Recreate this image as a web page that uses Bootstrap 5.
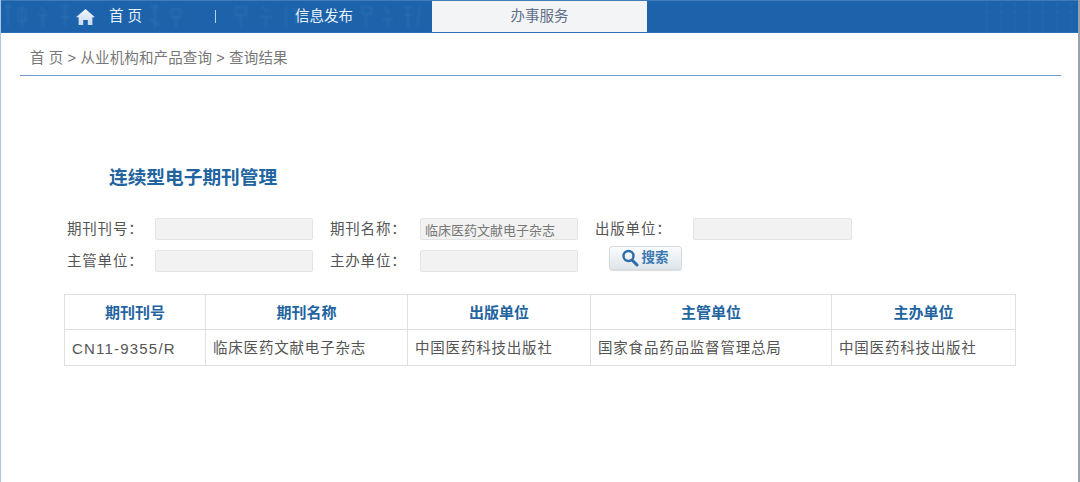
<!DOCTYPE html>
<html lang="zh">
<head>
<meta charset="utf-8">
<title>连续型电子期刊管理</title>
<link href="https://cdn.jsdelivr.net/npm/bootstrap@5.3.0/dist/css/bootstrap.min.css" rel="stylesheet">
<style>
html,body{height:482px;overflow:hidden;background:#fff}
body{font-family:"Liberation Sans","Noto Sans CJK SC",sans-serif;color:#555;font-size:14px;border-right:2px solid #9aa3ad;border-left:1px solid #a9c6e4}
.topbar{height:33px;background:#1d63ab;border-top:1px solid #3f7cbc;border-bottom:1px solid #2d6fb2;margin-left:-1px;margin-right:-2px;position:relative;overflow:hidden}
.topbar-pat{position:absolute;inset:0;pointer-events:none}
.home-link{width:215px;padding-left:76px;color:#eaf2fa;font-size:14.5px;gap:14px}
.home-link span,.info-link,.active-tab span{padding-top:1px}
.sep{width:1px;height:13px;background:#b9d0e8;align-self:center}
.info-link{width:216px;padding-left:79px;color:#eaf2fa;font-size:14.5px}
.active-tab{width:215px;height:31px;background:#f3f4f6;color:#5f7088;font-size:14.5px}
.crumb{margin:0 17px 0 19px;height:43px;padding:16px 0 0 10px;border-bottom:1px solid #6f9bd0;color:#777;font-size:14.5px;line-height:18px;letter-spacing:.14px}
.pg-title{margin:90px 0 0 108px;font-size:18.700px;line-height:24px;font-weight:700;color:#22649f}
.qform{margin:28px 0 0 66px;row-gap:10px;width:800px}
.qrow{height:22px}
.qlabel{width:88px;font-size:14.5px;letter-spacing:.8px;color:#555;line-height:22px}
.qlabel.w2{width:90px;margin-left:17px}
.qlabel.w3{width:98px;margin-left:17px}
.qinput{width:158px;height:22px;background:#f2f2f2;border:1px solid #e4e4e4;border-radius:2px;font-size:13px;color:#777;padding:0 4px;font-family:inherit}
.qinput.wide{width:159px}
.sbtn{width:73px;height:24px;margin:-4px 0 0 31px;background:linear-gradient(#fbfcfd,#dfe5ea);border:1px solid #d5dade;border-radius:3px;color:#3a78b2;font-size:13.5px;font-weight:700;gap:3px;padding:0 2px 0 0;box-shadow:0 1px 1px #ddd}
.rtable{margin:22px 0 0 63px;width:951px;table-layout:fixed;border-color:#dcdfe3;color:#555}
.rtable>:not(caption)>*>*{border:1px solid #dcdfe3;padding:0 7px;vertical-align:middle;color:#555;font-size:14.5px;background:transparent;box-shadow:none}
.rtable thead th{height:35px;text-align:center;color:#22649f;font-weight:700;font-size:15px;padding-top:2px}
.rtable tbody td{height:36px;letter-spacing:.8px;padding-top:3px}
.rtable tbody td.code-cell{letter-spacing:1.2px;font-size:15px}
</style>
</head>
<body>
<div class="topbar d-flex align-items-center">
  <svg class="topbar-pat" width="1080" height="33" aria-hidden="true">
    <defs><filter id="soft"><feGaussianBlur stdDeviation="1.1"/></filter></defs>
    <g fill="none" stroke="#4a86c4" stroke-width="1.600" opacity=".3" filter="url(#soft)">
      <path d="M4 6h9M8 3v22M18 8h8v12h-8zM22 4v22M40 6l5 5M38 14h10M43 14v12M60 5h10M65 5v20M60 16h10M112 5v8M120 4l-4 10M150 6h9M155 3v24M150 18l10 6M172 8h8v8h-8zM176 16v10M236 6h10v8h-10zM241 14v12M262 5l6 6M260 16h12M266 16v10M286 5v22M292 8h8M296 8v16M362 6h9v7h-9zM366 13v14M384 5l5 8M382 18h11M388 18v8M404 6h9M408 6v20M404 14h9M420 5l-3 20"/>
    </g>
    <g fill="none" stroke="#4a84c0" stroke-width="1.200" opacity=".35" filter="url(#soft)">
      <path stroke-dasharray="4 3" d="M987 2v30M1001 2v30M1015 2v30M1029 2v30M1043 2v30M1057 2v30M1071 2v30"/>
    </g>
  </svg>
  <a class="home-link d-flex align-items-center text-decoration-none position-relative">
    <svg width="19" height="16" viewBox="0 0 19 16" aria-hidden="true"><defs><linearGradient id="hg" x1="0" y1="0" x2="0" y2="1"><stop offset="0" stop-color="#f4f8fc"/><stop offset="1" stop-color="#c6d9ee"/></linearGradient></defs><path fill="url(#hg)" d="M9.500 0 19 8.200h-2.600V16h-4.600v-5H7.200v5H2.600V8.200H0z"/></svg>
    <span>首 页</span>
  </a>
  <span class="sep position-relative"></span>
  <a class="info-link text-decoration-none position-relative">信息发布</a>
  <a class="active-tab d-flex align-items-center justify-content-center text-decoration-none position-relative"><span>办事服务</span></a>
</div>

<div class="crumb">首 页 &gt; 从业机构和产品查询 &gt; 查询结果</div>

<h1 class="pg-title">连续型电子期刊管理</h1>

<form class="qform d-flex flex-column">
  <div class="qrow d-flex">
    <label class="qlabel">期刊刊号：</label><input class="qinput" type="text">
    <label class="qlabel w2">期刊名称：</label><input class="qinput" type="text" value="临床医药文献电子杂志">
    <label class="qlabel w3">出版单位：</label><input class="qinput wide" type="text">
  </div>
  <div class="qrow d-flex">
    <label class="qlabel">主管单位：</label><input class="qinput" type="text">
    <label class="qlabel w2">主办单位：</label><input class="qinput" type="text">
    <button type="button" class="sbtn btn d-flex align-items-center justify-content-center">
      <svg width="18" height="18" viewBox="0 0 18 18" aria-hidden="true"><circle cx="7.500" cy="7" r="5" fill="none" stroke="#2c6ca8" stroke-width="2.400"/><path d="M11 11l5 5" stroke="#2c6ca8" stroke-width="3" stroke-linecap="round"/></svg>
      <span>搜索</span>
    </button>
  </div>
</form>

<table class="rtable table mb-0">
  <colgroup><col style="width:141px"><col style="width:202px"><col style="width:183px"><col style="width:241px"><col style="width:184px"></colgroup>
  <thead><tr><th>期刊刊号</th><th>期刊名称</th><th>出版单位</th><th>主管单位</th><th>主办单位</th></tr></thead>
  <tbody><tr><td class="code-cell">CN11-9355/R</td><td>临床医药文献电子杂志</td><td>中国医药科技出版社</td><td>国家食品药品监督管理总局</td><td>中国医药科技出版社</td></tr></tbody>
</table>
</body>
</html>
